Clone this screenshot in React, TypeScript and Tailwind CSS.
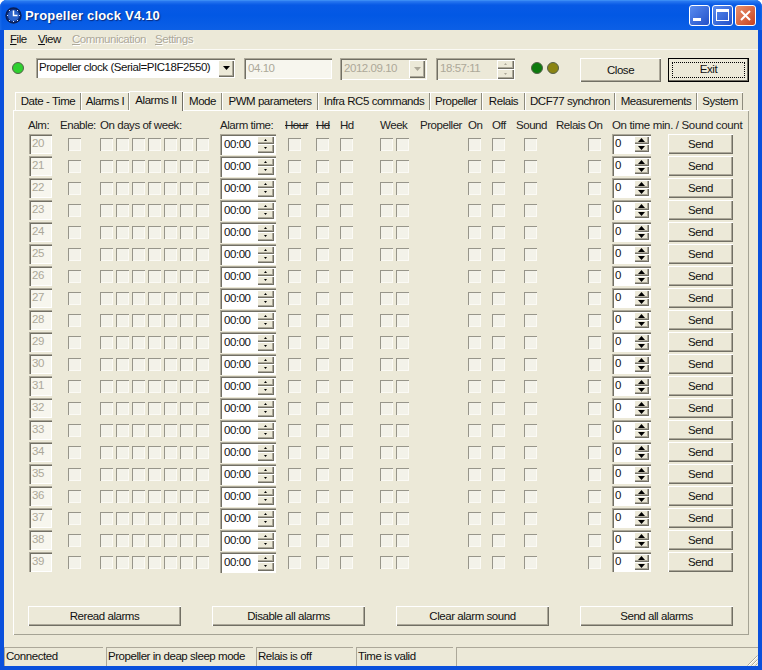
import React from "react";

const raised = "shadow-[inset_1px_1px_0_#ffffff,inset_-1px_-1px_0_#716f64,inset_-2px_-2px_0_#aca899]";
const sunken = "shadow-[inset_1px_1px_0_#aca899,inset_2px_2px_0_#716f64,inset_-1px_-1px_0_#ffffff]";

function Cb({ className = "" }: { className?: string }) {
  return <div className={`w-[13px] h-[13px] shrink-0 bg-[#f3f2e9] shadow-[inset_1px_1px_0_#97958a,inset_-1px_-1px_0_#fbfaf5] ${className}`} />;
}

function Led({ color, className = "" }: { color: string; className?: string }) {
  return (
    <svg width="12" height="12" viewBox="0 0 12 12" className={className}>
      <circle cx="6" cy="6" r="5.5" fill={color} stroke="#55604a" strokeWidth="1" />
    </svg>
  );
}

function Btn({ label, className = "" }: { label: string; className?: string }) {
  return (
    <div className={`flex items-center justify-center bg-[#ece9d8] text-[#111] pt-[1px] ${raised} ${className}`}>
      {label}
    </div>
  );
}

function Arrow({ dir, size, color = "#000" }: { dir: "up" | "down"; size: number; color?: string }) {
  const h = size;
  const w = size * 2 - 1;
  return (
    <svg width={w} height={h} viewBox={`0 0 ${w} ${h}`}>
      <polygon points={dir === "up" ? `${w / 2},0 ${w},${h} 0,${h}` : `0,0 ${w},0 ${w / 2},${h}`} fill={color} />
    </svg>
  );
}

function SpinBtns({ big, color, className = "" }: { big?: boolean; color?: string; className?: string }) {
  const s = big ? 4 : 2;
  return (
    <div className={`flex flex-col shrink-0 ${className}`}>
      <div className={`flex-1 flex items-center justify-center bg-[#ece9d8] ${raised}`}><Arrow dir="up" size={s} color={color} /></div>
      <div className={`flex-1 flex items-center justify-center bg-[#ece9d8] ${raised}`}><Arrow dir="down" size={s} color={color} /></div>
    </div>
  );
}

function AlarmRow({ n }: { n: number }) {
  return (
    <div className="flex items-center h-[20px] mb-[2px]">
      <div className={`w-[23px] h-[20px] flex items-center pl-[3px] text-[#aca899] bg-[#f7f6ee] ${sunken}`}>{n}</div>
      <Cb className="ml-[16px]" />
      <div className="flex gap-[3px] ml-[19px]">
        {[0, 1, 2, 3, 4, 5, 6].map((d) => <Cb key={d} />)}
      </div>
      <div className={`w-[56px] h-[21px] ml-[11px] flex items-center bg-white text-[#111] pl-[4px] pr-[2px] ${sunken}`}>
        <span className="flex-1 pt-[1px]">00:00</span>
        <SpinBtns className="w-[17px] h-[17px]" />
      </div>
      <Cb className="ml-[12px]" />
      <Cb className="ml-[15px]" />
      <Cb className="ml-[11px]" />
      <Cb className="ml-[27px]" />
      <Cb className="ml-[3px]" />
      <Cb className="ml-[59px]" />
      <Cb className="ml-[11px]" />
      <Cb className="ml-[19px]" />
      <Cb className="ml-[51px]" />
      <div className={`w-[39px] h-[20px] ml-[11px] flex items-center bg-white text-[#111] pl-[3px] pr-[2px] ${sunken}`}>
        <span className="flex-1">0</span>
        <SpinBtns big className="w-[15px] h-[16px]" />
      </div>
      <Btn label="Send" className="w-[65px] h-[20px] ml-[17px]" />
    </div>
  );
}

const headers: [string, string, boolean?][] = [
  ["Alm:", "w-[32px]"],
  ["Enable:", "w-[40px]"],
  ["On days of week:", "w-[120px]"],
  ["Alarm time:", "w-[65px]"],
  ["Hour", "w-[31px]", true],
  ["Hd", "w-[24px]", true],
  ["Hd", "w-[40px]"],
  ["Week", "w-[40px]"],
  ["Propeller", "w-[48px]"],
  ["On", "w-[24px]"],
  ["Off", "w-[24px]"],
  ["Sound", "w-[40px]"],
  ["Relais On", "w-[56px]"],
  ["On time min. / Sound count", "w-[132px] tracking-[-0.35px]"],
];

const tabs: [string, string][] = [
  ["Date - Time", "w-[66px]"],
  ["Alarms I", "w-[48px]"],
  ["Alarms II", "w-[54px]"],
  ["Mode", "w-[39px]"],
  ["PWM parameters", "w-[96px]"],
  ["Infra RC5 commands", "w-[112px]"],
  ["Propeller", "w-[52px]"],
  ["Relais", "w-[43px]"],
  ["DCF77 synchron", "w-[90px]"],
  ["Measurements", "w-[82px]"],
  ["System", "w-[46px]"],
];

const rows = Array.from({ length: 20 }, (_, i) => 20 + i);

function ClockIcon() {
  return (
    <svg width="17" height="17" viewBox="0 0 17 17" className="shrink-0">
      <circle cx="8.5" cy="8.5" r="7.5" fill="#0b2f83" stroke="#0a1f55" strokeWidth="1.4" />
      <circle cx="8.5" cy="8.5" r="5.5" fill="#2a62c9" />
      <path d="M8.5 3.5V8.5H12.5" stroke="#fff" strokeWidth="1.5" fill="none" />
      <g fill="#dfe8ff">
        <rect x="2" y="8" width="1" height="1" />
        <rect x="14" y="8" width="1" height="1" />
        <rect x="8" y="14" width="1" height="1" />
        <rect x="4" y="3" width="1" height="1" />
        <rect x="12" y="3" width="1" height="1" />
        <rect x="4" y="13" width="1" height="1" />
        <rect x="12" y="13" width="1" height="1" />
      </g>
    </svg>
  );
}

function WinBtn({ className, children }: { className: string; children: React.ReactNode }) {
  return (
    <div className={`w-[21px] h-[21px] rounded-[3px] border border-white flex items-center justify-center ${className}`}>
      {children}
    </div>
  );
}

export default function App() {
  return (
    <div className="w-[762px] h-[670px] bg-white [font-family:'Liberation_Sans',Arial,sans-serif] text-[11.5px] tracking-[-0.45px] overflow-hidden">
      <div className="w-full h-full rounded-t-[7px] bg-[#0a50dc] flex flex-col overflow-hidden">
        {/* Title bar */}
        <div className="h-[30px] shrink-0 flex items-center pl-[5px] pr-[6px] bg-gradient-to-b from-[#0a5ae6] via-[#0258e4] to-[#0c5fe6] shadow-[inset_0_1px_0_#3a8cf5,inset_0_3px_3px_#2b7af0]">
          <ClockIcon />
          <span className="ml-[3px] mt-[2px] text-white font-bold text-[13px] tracking-[0.2px] [text-shadow:1px_1px_1px_#0a2a7c]">Propeller clock V4.10</span>
          <div className="ml-auto flex gap-[2px]">
            <WinBtn className="bg-gradient-to-br from-[#5a8cf0] to-[#2450c8]">
              <div className="w-[8px] h-[3px] bg-white mt-[9px] mr-[5px]" />
            </WinBtn>
            <WinBtn className="bg-gradient-to-br from-[#5a8cf0] to-[#2450c8]">
              <div className="w-[13px] h-[12px] border border-white border-t-[3px]" />
            </WinBtn>
            <WinBtn className="bg-gradient-to-br from-[#e8916c] to-[#c8401c]">
              <svg width="11" height="11" viewBox="0 0 11 11"><path d="M1 1L10 10M10 1L1 10" stroke="#fff" strokeWidth="2" /></svg>
            </WinBtn>
          </div>
        </div>

        {/* Client */}
        <div className="mx-[4px] h-[636px] shrink-0 bg-[#ece9d8] flex flex-col">
          {/* Menu */}
          <div className="h-[20px] shrink-0 flex items-center text-[#111] shadow-[inset_0_-1px_0_#fbfaf5] whitespace-nowrap">
            <span className="ml-[6px] w-[28px]"><u>F</u>ile</span>
            <span className="w-[34px]"><u>V</u>iew</span>
            <span className="w-[83px] text-[#aca899] [text-shadow:1px_1px_0_#fff]"><u>C</u>ommunication</span>
            <span className="text-[#aca899] [text-shadow:1px_1px_0_#fff]"><u>S</u>ettings</span>
          </div>

          {/* Toolbar */}
          <div className="h-[40px] shrink-0 flex items-start pt-[8px] whitespace-nowrap">
            <Led color="#2fd12f" className="ml-[8px] mt-[4px]" />
            <div className={`ml-[12px] w-[199px] h-[20px] flex items-center bg-white pl-[3px] pr-[1px] ${sunken}`}>
              <span className="flex-1 text-[#111]">Propeller clock (Serial=PIC18F2550)</span>
              <div className={`w-[16px] h-[17px] bg-[#ece9d8] flex items-center justify-center ${raised}`}><Arrow dir="down" size={4} /></div>
            </div>
            <div className={`ml-[9px] w-[88px] h-[21px] flex items-center pl-[4px] bg-[#f7f6ee] text-[#aca899] ${sunken}`}>04.10</div>
            <div className={`ml-[8px] w-[87px] h-[22px] flex items-center pl-[4px] pr-[2px] bg-[#ece9d8] text-[#aca899] ${sunken}`}>
              <span className="flex-1">2012.09.10</span>
              <div className={`w-[16px] h-[18px] flex items-center justify-center ${raised}`}><Arrow dir="down" size={4} color="#aca899" /></div>
            </div>
            <div className={`ml-[9px] w-[79px] h-[22px] flex items-center pl-[4px] pr-[1px] bg-[#ece9d8] text-[#aca899] ${sunken}`}>
              <span className="flex-1">18:57:11</span>
              <SpinBtns color="#aca899" className="w-[17px] h-[19px]" />
            </div>
            <Led color="#0d7a0d" className="ml-[16px] mt-[4px]" />
            <Led color="#8a8412" className="ml-[4px] mt-[4px]" />
            <Btn label="Close" className="ml-[21px] w-[81px] h-[24px]" />
            <div className="ml-[7px] w-[81px] h-[24px] border border-black bg-[#ece9d8] shadow-[inset_-1px_-1px_0_#716f64] p-[3px] text-[#111]">
              <div className="w-full h-full border border-dotted border-black flex items-center justify-center">Exit</div>
            </div>
          </div>

          {/* Tabs */}
          <div className="h-[20px] shrink-0 flex items-end pl-[11px] text-[#111] relative z-10">
            {tabs.map(([t, w]) =>
              t === "Alarms II" ? (
                <div key={t} className={`${w} h-[20px] -mb-[1px] bg-[#ece9d8] flex items-start justify-center pt-[1px] whitespace-nowrap shadow-[inset_1px_1px_0_#fff,inset_-1px_0_0_#716f64]`}>{t}</div>
              ) : (
                <div key={t} className={`${w} h-[18px] flex items-center justify-center pt-[1px] whitespace-nowrap shadow-[inset_1px_1px_0_#fff,inset_-1px_0_0_#8d8b7d]`}>{t}</div>
              )
            )}
          </div>

          {/* Panel */}
          <div className="ml-[9px] w-[736px] h-[525px] shrink-0 flex flex-col pl-[16px] shadow-[inset_1px_1px_0_#fff,inset_-1px_-1px_0_#a5a394]">
            <div className="h-[24px] shrink-0 flex items-end -ml-[1px] text-[#222] whitespace-nowrap">
              {headers.map(([t, w, strike], i) => (
                <div key={i} className={`${w} ${strike ? "line-through" : ""}`}>{t}</div>
              ))}
            </div>
            <div className="flex flex-col">
              {rows.map((n) => <AlarmRow key={n} n={n} />)}
            </div>
            <div className="flex gap-[31px] mt-[32px] -ml-[1px]">
              {["Reread alarms", "Disable all alarms", "Clear alarm sound", "Send all alarms"].map((b) => (
                <Btn key={b} label={b} className="w-[153px] h-[20px]" />
              ))}
            </div>
          </div>

          {/* Status bar */}
          <div className="mt-auto h-[19px] shrink-0 flex gap-[3px] text-[#111] whitespace-nowrap">
            {[["Connected", "w-[99px]"], ["Propeller in deap sleep mode", "w-[147px]"], ["Relais is off", "w-[97px]"], ["Time is valid", "w-[97px]"]].map(([t, w], i) => (
              <div key={i} className={`${w} h-full flex items-center pl-[2px] pt-[1px] shadow-[inset_1px_1px_0_#aca899]`}>{t}</div>
            ))}
            <div className="flex-1 h-full flex items-end justify-end shadow-[inset_1px_1px_0_#aca899]">
              <svg width="12" height="12" viewBox="0 0 12 12">
                <path d="M11.5 1.5L1.5 11.5M11.5 5.5L5.5 11.5M11.5 9.5L9.5 11.5" stroke="#aca899" strokeWidth="1" />
                <path d="M11.5 2.5L2.5 11.5M11.5 6.5L6.5 11.5M11.5 10.5L10.5 11.5" stroke="#fff" strokeWidth="1" />
              </svg>
            </div>
          </div>
        </div>
      </div>
    </div>
  );
}
